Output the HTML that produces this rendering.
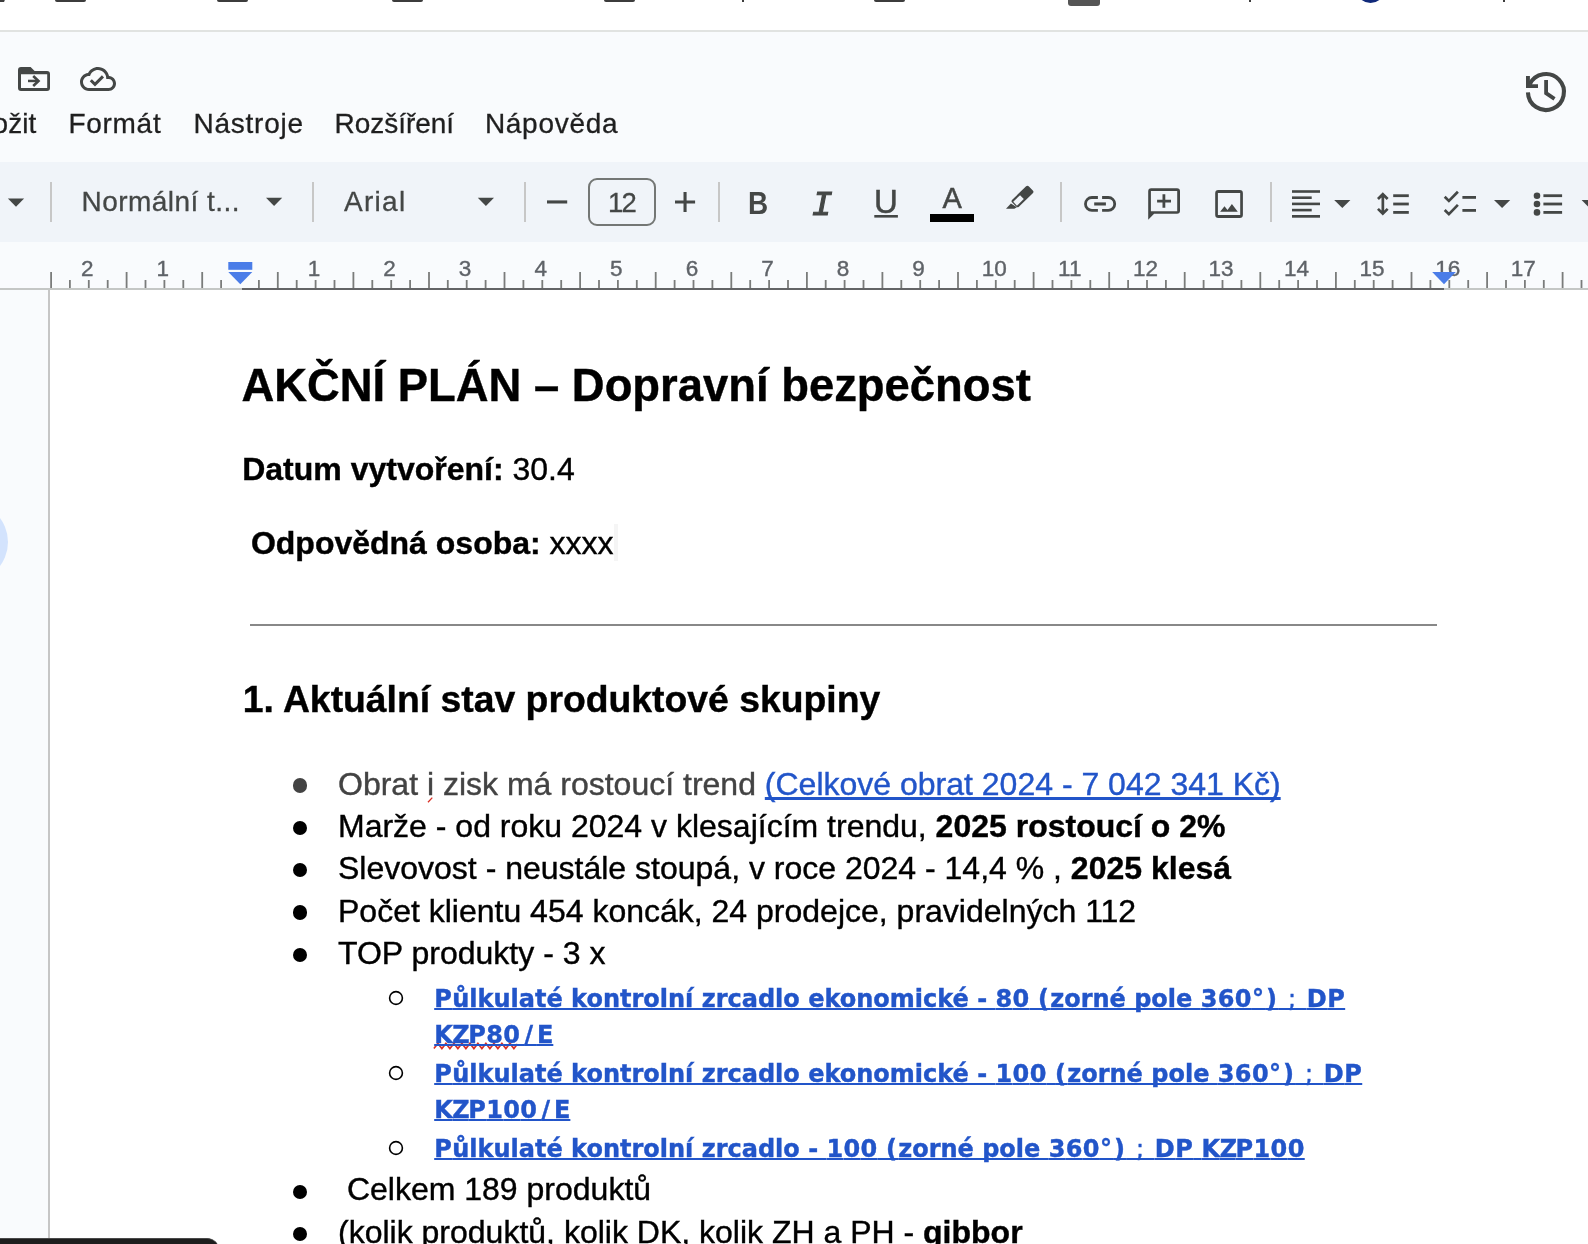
<!DOCTYPE html>
<html lang="cs">
<head>
<meta charset="utf-8">
<title>AKČNÍ PLÁN – Dopravní bezpečnost</title>
<style>
*{box-sizing:border-box;margin:0;padding:0}
html,body{width:1588px;height:1244px;overflow:hidden;background:#f9fbfd}
body{position:relative;font-family:"Liberation Sans",sans-serif;color:#000}
#root{position:absolute;left:0;top:0;width:1588px;height:1244px;overflow:hidden;will-change:transform}
.abs{position:absolute}
.t{position:absolute;white-space:pre;line-height:1}
/* browser chrome strip */
#chrome{left:0;top:0;width:1588px;height:30px;background:#fff}
#chromeline{left:0;top:30px;width:1588px;height:2px;background:#e1e3e1}
.cb{position:absolute;top:-4px;width:31px;height:6px;border-radius:2px;background:#3c3c3c}
/* menus */
.menu{font-size:28px;color:#1f1f1f;top:110px;-webkit-text-stroke:.3px #1f1f1f}
/* toolbar */
#toolbar{left:-40px;top:162px;width:1700px;height:80px;background:#f0f4f9}
.sep{position:absolute;top:182px;width:2px;height:40px;background:#c7c7c7}
.tb{font-size:28px;color:#444746;top:187px;-webkit-text-stroke:.3px #444746}
/* ruler */
.rn{position:absolute;top:257.800px;width:40px;text-align:center;font-size:22.500px;line-height:22px;color:#5f6368;-webkit-text-stroke:.4px #5f6368}
/* page */
#page{left:50px;top:290px;width:1600px;height:1000px;background:#fff}
#pageborder{left:48px;top:290px;width:2px;height:1000px;background:#c6c6c6}
.doc{position:absolute;white-space:pre;line-height:1;color:#000;-webkit-text-stroke:.4px}
.b{font-weight:bold}
.li{font-size:32px}
.lk{font-family:"DejaVu Sans","Liberation Sans",sans-serif;font-weight:bold;font-size:24px;color:#2255c9;text-decoration:underline;text-decoration-thickness:2px;text-underline-offset:1.200px;text-decoration-skip-ink:none}
.lk i{font-style:normal;font-weight:normal;letter-spacing:1.470px}
.al{color:#2255c9;text-decoration:underline;text-decoration-thickness:2.500px;text-underline-offset:2px;text-decoration-skip-ink:none}
.bul{position:absolute;width:14px;height:14px;border-radius:50%;background:#000}
.obul{position:absolute;border-radius:50%;border:1.600px solid #000}
</style>
</head>
<body>
<div id="root">
<div class="abs" id="chrome"></div>
<div class="abs" id="chromeline"></div>
<div class="cb" style="left:55px"></div><div class="cb" style="left:217px"></div><div class="cb" style="left:392px"></div><div class="cb" style="left:604px"></div><div class="cb" style="left:874px"></div>
<div class="abs" style="left:0;top:-3px;width:5px;height:5px;background:#3c3c3c;transform:skewX(-20deg)"></div>
<div class="abs" style="left:742px;top:0;width:2px;height:2px;background:#3c3c3c"></div>
<div class="abs" style="left:1249px;top:0;width:2px;height:2px;background:#3c3c3c"></div>
<div class="abs" style="left:1503px;top:0;width:2px;height:2px;background:#3c3c3c"></div>
<div class="abs" style="left:1068px;top:-4px;width:32px;height:10px;border-radius:3px;background:#555"></div>
<div class="abs" style="left:1356px;top:-26px;width:29px;height:29px;border-radius:50%;background:#10297a"></div>

<!-- menu row -->
<div class="t menu" style="left:-7.400px">ožit</div>
<div class="t menu" style="left:68.500px;letter-spacing:.7px">Formát</div>
<div class="t menu" style="left:193.500px;letter-spacing:.75px">Nástroje</div>
<div class="t menu" style="left:334.600px;letter-spacing:-.05px">Rozšíření</div>
<div class="t menu" style="left:484.900px;letter-spacing:.72px">Nápověda</div>

<!-- toolbar -->
<div class="abs" id="toolbar"></div>
<div class="sep" style="left:50px"></div>
<div class="sep" style="left:312px"></div>
<div class="sep" style="left:524px"></div>
<div class="sep" style="left:718px"></div>
<div class="sep" style="left:1060px"></div>
<div class="sep" style="left:1270px"></div>
<div class="t tb" style="left:81.500px;top:187.800px;letter-spacing:.46px">Normální t...</div>
<div class="t tb" style="left:344px;top:187.800px;letter-spacing:1.300px">Arial</div>
<div class="abs" style="left:588px;top:178px;width:68px;height:48px;border:2px solid #747775;border-radius:9px"></div>
<div class="t tb" style="left:608px;top:189px;font-size:27.500px;letter-spacing:-1.800px">12</div>

<!-- title row icons -->
<svg class="abs" style="left:0;top:55px" width="1588" height="70" viewBox="0 55 1588 70" fill="#444746">
<!-- move to folder -->
<path fill-rule="evenodd" d="M21 67h9.600l4 4H47a3 3 0 0 1 3 3v14a3 3 0 0 1-3 3H21a3 3 0 0 1-3-3V70a3 3 0 0 1 3-3zM21 74.200V88h26.200V74.200z"/>
<path d="M28 79.700h9v2.500h-9z"/><path d="M33.200 76l5.300 5-5.300 5" fill="none" stroke="#444746" stroke-width="2.600"/>
<!-- cloud done -->
<g transform="translate(80 61) scale(1.5)"><path d="M19.350 10.040C18.670 6.590 15.640 4 12 4 9.110 4 6.600 5.640 5.350 8.040 2.340 8.360 0 10.910 0 14c0 3.310 2.690 6 6 6h13c2.760 0 5-2.240 5-5 0-2.640-2.050-4.780-4.650-4.960zM19 18H6c-2.210 0-4-1.790-4-4s1.790-4 4-4h.710C7.370 7.690 9.480 6 12 6c3.040 0 5.500 2.460 5.500 5.500v.5H19c1.660 0 3 1.340 3 3s-1.340 3-3 3zm-9-3.820l-2.090-2.090L6.500 13.500 10 17l6.010-6.010-1.410-1.410z"/></g>
<!-- history -->
<g fill="none" stroke="#444746" stroke-width="4.100">
<path d="M1529.65 84.36A18.00 18.00 0 1 1 1527.95 92.40"/>
<path d="M1546.100 80v13.200l8.400 5.600" stroke-width="3.800"/>
</g>
<path d="M1526 76.100h3.900v8.100h8.100v3.800h-12z"/>
</svg>

<!-- toolbar icons -->
<svg class="abs" style="left:0;top:162px" width="1588" height="80" viewBox="0 162 1588 80" fill="#444746">
<path d="M7.900 198.600h16.200l-8.100 8.100z"/>
<path d="M266 197.800h16.200l-8.100 8.100z"/>
<path d="M477.800 197.800h16.200l-8.100 8.100z"/>
<rect x="547" y="200.400" width="20.200" height="3.100"/>
<path d="M675 200.400h8.500v-8.500h3.100v8.500h8.500v3.100h-8.500v8.600h-3.100v-8.600H675z"/>
<!-- underline bar, text colour bar -->
<rect x="874.300" y="215" width="23.600" height="2.600"/>
<rect x="930" y="214" width="44" height="8" fill="#000"/>
<!-- highlighter -->
<g>
<rect x="1010.850" y="191.700" width="23.300" height="9.600" rx="2" transform="rotate(-44 1022.500 196.500)"/>
<rect x="1013.750" y="197.750" width="9.500" height="5.400" fill="#f0f4f9" transform="rotate(-44 1018.500 200.450)"/>
<path d="M1010.900 203.600l-4.900 5.200h8.300l2.600-1.500z"/>
</g>
<!-- link -->
<g fill="none" stroke="#444746" stroke-width="2.800">
<path d="M1097.900 197.500h-6a6.420 6.420 0 0 0 0 12.850h6"/>
<path d="M1102.100 197.500h6.200a6.420 6.420 0 0 1 0 12.850h-6.200"/>
</g>
<rect x="1094.200" y="202.400" width="11.700" height="3.100"/>
<!-- add comment -->
<path fill-rule="evenodd" d="M1151.200 188.200H1177a3 3 0 0 1 3 3v19.600a3 3 0 0 1-3 3h-22.900l-5.900 6V191.200a3 3 0 0 1 3-3zM1150.900 190.900v20.300h26.300v-20.300z"/>
<path d="M1162.500 194.300h2.800v5.400h5.700v2.800h-5.700v5.200h-2.800v-5.200h-5.400v-2.800h5.400z"/>
<!-- image -->
<path fill-rule="evenodd" d="M1218.400 190.100h21.300a3.200 3.200 0 0 1 3.200 3.200v21.400a3.200 3.200 0 0 1-3.200 3.200h-21.300a3.200 3.200 0 0 1-3.200-3.200v-21.400a3.200 3.200 0 0 1 3.200-3.200zM1217.900 192.900V215h22.300v-22.100z"/>
<path d="M1220.100 211.800l4.400-5.600 3 3.800 4.400-5.900 5.900 7.700z"/>
<!-- align left -->
<rect x="1292" y="190.200" width="28" height="2.600"/>
<rect x="1292" y="196.400" width="19.700" height="2.600"/>
<rect x="1292" y="202.600" width="28" height="2.600"/>
<rect x="1292" y="208.800" width="19.700" height="2.600"/>
<rect x="1292" y="215" width="28" height="2.700"/>
<path d="M1334.200 200h16.200l-8.100 8.100z"/>
<!-- line spacing -->
<rect x="1393.200" y="194.300" width="15.600" height="2.800"/>
<rect x="1393.200" y="202.600" width="15.600" height="2.800"/>
<rect x="1393.200" y="211" width="15.600" height="2.800"/>
<path d="M1382.800 192.300l5.800 5.800-1.900 1.900-2.500-2.500v12.900l2.500-2.500 1.900 1.900-5.800 5.800-5.800-5.800 1.900-1.900 2.600 2.500v-12.900l-2.600 2.500-1.900-1.900z"/>
<!-- checklist -->
<g fill="none" stroke="#444746" stroke-width="2.700">
<path d="M1444.700 196.800l4.200 4.100 9-9.200"/>
<path d="M1444.700 210l4.200 4.100 9-9.200"/>
</g>
<rect x="1462.400" y="196" width="13.600" height="2.800"/>
<rect x="1462.400" y="209" width="13.600" height="2.800"/>
<path d="M1494 200h16.200l-8.100 8.100z"/>
<!-- bulleted list -->
<circle cx="1537" cy="195.800" r="3.300"/>
<circle cx="1537" cy="204" r="3.300"/>
<circle cx="1537" cy="212.400" r="3.300"/>
<rect x="1543.400" y="194.300" width="18.700" height="2.800"/>
<rect x="1543.400" y="202.600" width="18.700" height="2.800"/>
<rect x="1543.400" y="211" width="18.700" height="2.800"/>
<path d="M1581.600 200h16.200l-8.100 8.100z"/>
</svg>
<div class="t" style="left:748px;top:188.300px;font-size:31px;font-weight:bold;color:#444746;transform:scaleX(.9);transform-origin:0 0">B</div>
<div class="t" style="left:811.500px;top:188.800px;font-size:35px;font-family:'Liberation Mono',monospace;font-style:italic;color:#444746;-webkit-text-stroke:1.100px #444746">I</div>
<div class="t" style="left:874px;top:185px;font-size:33px;color:#444746;-webkit-text-stroke:.5px #444746">U</div>
<div class="t" style="left:942.500px;top:184.300px;font-size:29px;color:#444746;-webkit-text-stroke:.5px #444746">A</div>


<!-- ruler -->
<div class="rn" style="left:67.2px">2</div><div class="rn" style="left:142.8px">1</div><div class="rn" style="left:294.0px">1</div><div class="rn" style="left:369.6px">2</div><div class="rn" style="left:445.1px">3</div><div class="rn" style="left:520.7px">4</div><div class="rn" style="left:596.3px">5</div><div class="rn" style="left:671.9px">6</div><div class="rn" style="left:747.5px">7</div><div class="rn" style="left:823.0px">8</div><div class="rn" style="left:898.6px">9</div><div class="rn" style="left:974.2px">10</div><div class="rn" style="left:1049.8px">11</div><div class="rn" style="left:1125.4px">12</div><div class="rn" style="left:1200.9px">13</div><div class="rn" style="left:1276.5px">14</div><div class="rn" style="left:1352.1px">15</div><div class="rn" style="left:1427.7px">16</div><div class="rn" style="left:1503.3px">17</div><svg class="abs" style="left:0;top:244px" width="1588" height="50" viewBox="0 244 1588 50"><rect x="0" y="288" width="1588" height="2" fill="#c4c7c5"/><rect x="242" y="288" width="1202" height="2" fill="#636466"/><g fill="#7a7c7b"><rect x="50.2" y="272" width="1.800" height="16"/><rect x="69.0" y="280" width="1.800" height="8"/><rect x="87.9" y="280" width="1.800" height="8"/><rect x="106.8" y="280" width="1.800" height="8"/><rect x="125.7" y="272" width="1.800" height="16"/><rect x="144.6" y="280" width="1.800" height="8"/><rect x="163.5" y="280" width="1.800" height="8"/><rect x="182.4" y="280" width="1.800" height="8"/><rect x="201.3" y="272" width="1.800" height="16"/><rect x="220.2" y="280" width="1.800" height="8"/><rect x="258.0" y="280" width="1.800" height="8"/><rect x="276.9" y="272" width="1.800" height="16"/><rect x="295.8" y="280" width="1.800" height="8"/><rect x="314.7" y="280" width="1.800" height="8"/><rect x="333.6" y="280" width="1.800" height="8"/><rect x="352.5" y="272" width="1.800" height="16"/><rect x="371.4" y="280" width="1.800" height="8"/><rect x="390.3" y="280" width="1.800" height="8"/><rect x="409.2" y="280" width="1.800" height="8"/><rect x="428.1" y="272" width="1.800" height="16"/><rect x="446.9" y="280" width="1.800" height="8"/><rect x="465.8" y="280" width="1.800" height="8"/><rect x="484.7" y="280" width="1.800" height="8"/><rect x="503.6" y="272" width="1.800" height="16"/><rect x="522.5" y="280" width="1.800" height="8"/><rect x="541.4" y="280" width="1.800" height="8"/><rect x="560.3" y="280" width="1.800" height="8"/><rect x="579.2" y="272" width="1.800" height="16"/><rect x="598.1" y="280" width="1.800" height="8"/><rect x="617.0" y="280" width="1.800" height="8"/><rect x="635.9" y="280" width="1.800" height="8"/><rect x="654.8" y="272" width="1.800" height="16"/><rect x="673.7" y="280" width="1.800" height="8"/><rect x="692.6" y="280" width="1.800" height="8"/><rect x="711.5" y="280" width="1.800" height="8"/><rect x="730.4" y="272" width="1.800" height="16"/><rect x="749.3" y="280" width="1.800" height="8"/><rect x="768.2" y="280" width="1.800" height="8"/><rect x="787.1" y="280" width="1.800" height="8"/><rect x="806.0" y="272" width="1.800" height="16"/><rect x="824.8" y="280" width="1.800" height="8"/><rect x="843.7" y="280" width="1.800" height="8"/><rect x="862.6" y="280" width="1.800" height="8"/><rect x="881.5" y="272" width="1.800" height="16"/><rect x="900.4" y="280" width="1.800" height="8"/><rect x="919.3" y="280" width="1.800" height="8"/><rect x="938.2" y="280" width="1.800" height="8"/><rect x="957.1" y="272" width="1.800" height="16"/><rect x="976.0" y="280" width="1.800" height="8"/><rect x="994.9" y="280" width="1.800" height="8"/><rect x="1013.8" y="280" width="1.800" height="8"/><rect x="1032.7" y="272" width="1.800" height="16"/><rect x="1051.6" y="280" width="1.800" height="8"/><rect x="1070.5" y="280" width="1.800" height="8"/><rect x="1089.4" y="280" width="1.800" height="8"/><rect x="1108.3" y="272" width="1.800" height="16"/><rect x="1127.2" y="280" width="1.800" height="8"/><rect x="1146.1" y="280" width="1.800" height="8"/><rect x="1165.0" y="280" width="1.800" height="8"/><rect x="1183.8" y="272" width="1.800" height="16"/><rect x="1202.7" y="280" width="1.800" height="8"/><rect x="1221.6" y="280" width="1.800" height="8"/><rect x="1240.5" y="280" width="1.800" height="8"/><rect x="1259.4" y="272" width="1.800" height="16"/><rect x="1278.3" y="280" width="1.800" height="8"/><rect x="1297.2" y="280" width="1.800" height="8"/><rect x="1316.1" y="280" width="1.800" height="8"/><rect x="1335.0" y="272" width="1.800" height="16"/><rect x="1353.9" y="280" width="1.800" height="8"/><rect x="1372.8" y="280" width="1.800" height="8"/><rect x="1391.7" y="280" width="1.800" height="8"/><rect x="1410.6" y="272" width="1.800" height="16"/><rect x="1429.5" y="280" width="1.800" height="8"/><rect x="1448.4" y="280" width="1.800" height="8"/><rect x="1467.3" y="280" width="1.800" height="8"/><rect x="1486.2" y="272" width="1.800" height="16"/><rect x="1505.1" y="280" width="1.800" height="8"/><rect x="1524.0" y="280" width="1.800" height="8"/><rect x="1542.9" y="280" width="1.800" height="8"/><rect x="1561.7" y="272" width="1.800" height="16"/><rect x="1580.6" y="280" width="1.800" height="8"/></g><g fill="#4b7de8"><rect x="228.300" y="262" width="24" height="7.800"/><path d="M228.300 272h24l-12 12.300z"/><path d="M1432.200 272h23.600l-11.800 12.300z"/></g></svg>

<!-- page -->
<div class="abs" id="page"></div>
<div class="abs" id="pageborder"></div>
<div class="abs" style="left:-72px;top:502px;width:80px;height:80px;border-radius:50%;background:#d3e3fd"></div>

<div class="doc b" style="left:241.50px;top:363.07px;font-size:45.40px;">AKČNÍ PLÁN – Dopravní bezpečnost</div>
<div class="doc " style="left:242.20px;top:453.31px;font-size:32.00px;"><b>Datum vytvoření:</b> 30.4</div>
<div class="doc " style="left:242.00px;top:526.91px;font-size:32.00px;"> <b>Odpovědná osoba:</b> xxxx</div>
<div class="abs" style="left:614.200px;top:524px;width:3.700px;height:36.500px;background:#f5f5f5"></div>
<div class="abs" style="left:250px;top:624px;width:1187px;height:2px;background:#888"></div>
<div class="doc b" style="left:242.80px;top:681.40px;font-size:37.33px;">1. Aktuální stav produktové skupiny</div>
<div class="bul" style="left:292.80px;top:778.40px;width:14.40px;height:14.40px;background:#434343"></div>
<div class="doc " style="left:338.00px;top:767.51px;font-size:32.00px;"><span style="color:#434343">Obrat i zisk má rostoucí trend </span><span class="al">(Celkové obrat 2024 - 7 042 341 Kč)</span></div>
<div class="bul" style="left:292.80px;top:820.70px;width:14.40px;height:14.40px;background:#000"></div>
<div class="doc " style="left:338.00px;top:809.81px;font-size:32.00px;">Marže - od roku 2024 v klesajícím trendu, <b>2025 rostoucí o 2%</b></div>
<div class="bul" style="left:292.80px;top:863.00px;width:14.40px;height:14.40px;background:#000"></div>
<div class="doc " style="left:338.00px;top:852.11px;font-size:32.00px;">Slevovost - neustále stoupá, v roce 2024 - 14,4 % , <b>2025 klesá</b></div>
<div class="bul" style="left:292.80px;top:905.40px;width:14.40px;height:14.40px;background:#000"></div>
<div class="doc " style="left:338.00px;top:894.51px;font-size:32.00px;">Počet klientu 454 koncák, 24 prodejce, pravidelných 112</div>
<div class="bul" style="left:292.80px;top:947.70px;width:14.40px;height:14.40px;background:#000"></div>
<div class="doc " style="left:338.00px;top:936.81px;font-size:32.00px;">TOP produkty - 3 x</div>
<svg class="abs" style="left:420px;top:1036px" width="120" height="20" viewBox="420 1036 120 20"><path d="M433.9 1048.6 L437.9 1043.4 L441.9 1048.6 L445.9 1043.4 L449.9 1048.6 L453.9 1043.4 L457.9 1048.6 L461.9 1043.4 L465.9 1048.6 L469.9 1043.4 L473.9 1048.6 L477.9 1043.4 L481.9 1048.6 L485.9 1043.4 L489.9 1048.6 L493.9 1043.4 L497.9 1048.6 L501.9 1043.4 L505.9 1048.6 L509.9 1043.4 L513.9 1048.6 L517.4 1044" fill="none" stroke="#d93025" stroke-width="1.600"/></svg>
<svg class="abs" style="left:424px;top:794px" width="12" height="12" viewBox="424 794 12 12"><path d="M428 802.300L432.300 797.600" fill="none" stroke="#d93025" stroke-width="1.300"/></svg>
<svg class="abs" style="left:385.50px;top:987.70px" width="20" height="20" viewBox="0 0 20 20"><circle cx="10" cy="10" r="6.40" fill="none" stroke="#000" stroke-width="1.600"/></svg>
<div class="doc lk" style="left:434.20px;top:986.68px;font-size:24.00px;"><span style="letter-spacing:0.40px">P</span>ůlkulaté kontrolní zrcadlo ekonomické - <span style="letter-spacing:0.36px">8</span><span style="letter-spacing:0.36px">0</span> <span style="letter-spacing:1.20px">(</span>zorné pole <span style="letter-spacing:0.36px">3</span><span style="letter-spacing:0.36px">6</span><span style="letter-spacing:0.36px">0</span><span style="letter-spacing:2.00px">°</span><span style="letter-spacing:2.00px">)</span><i> ; </i><span style="letter-spacing:0.60px">D</span><span style="letter-spacing:0.40px">P</span></div>
<div class="doc lk" style="left:434.20px;top:1022.78px;font-size:24.00px;"><span style="letter-spacing:-0.50px">K</span><span style="letter-spacing:-1.50px">Z</span><span style="letter-spacing:0.40px">P</span><span style="letter-spacing:0.36px">8</span><span style="letter-spacing:4.26px">0</span><span style="letter-spacing:3.90px">/</span>E</div>
<svg class="abs" style="left:385.50px;top:1062.90px" width="20" height="20" viewBox="0 0 20 20"><circle cx="10" cy="10" r="6.40" fill="none" stroke="#000" stroke-width="1.600"/></svg>
<div class="doc lk" style="left:434.20px;top:1061.88px;font-size:24.00px;"><span style="letter-spacing:0.40px">P</span>ůlkulaté kontrolní zrcadlo ekonomické - <span style="letter-spacing:0.36px">1</span><span style="letter-spacing:0.36px">0</span><span style="letter-spacing:0.36px">0</span> <span style="letter-spacing:1.20px">(</span>zorné pole <span style="letter-spacing:0.36px">3</span><span style="letter-spacing:0.36px">6</span><span style="letter-spacing:0.36px">0</span><span style="letter-spacing:2.00px">°</span><span style="letter-spacing:2.00px">)</span><i> ; </i><span style="letter-spacing:0.60px">D</span><span style="letter-spacing:0.40px">P</span></div>
<div class="doc lk" style="left:434.20px;top:1098.08px;font-size:24.00px;"><span style="letter-spacing:-0.50px">K</span><span style="letter-spacing:-1.50px">Z</span><span style="letter-spacing:0.40px">P</span><span style="letter-spacing:0.36px">1</span><span style="letter-spacing:0.36px">0</span><span style="letter-spacing:4.26px">0</span><span style="letter-spacing:3.90px">/</span>E</div>
<svg class="abs" style="left:385.50px;top:1138.20px" width="20" height="20" viewBox="0 0 20 20"><circle cx="10" cy="10" r="6.40" fill="none" stroke="#000" stroke-width="1.600"/></svg>
<div class="doc lk" style="left:434.20px;top:1137.18px;font-size:24.00px;"><span style="letter-spacing:0.40px">P</span>ůlkulaté kontrolní zrcadlo - <span style="letter-spacing:0.36px">1</span><span style="letter-spacing:0.36px">0</span><span style="letter-spacing:0.36px">0</span> <span style="letter-spacing:1.20px">(</span>zorné pole <span style="letter-spacing:0.36px">3</span><span style="letter-spacing:0.36px">6</span><span style="letter-spacing:0.36px">0</span><span style="letter-spacing:2.00px">°</span><span style="letter-spacing:2.00px">)</span><i> ; </i><span style="letter-spacing:0.60px">D</span><span style="letter-spacing:0.40px">P</span> <span style="letter-spacing:-0.50px">K</span><span style="letter-spacing:-1.50px">Z</span><span style="letter-spacing:0.40px">P</span><span style="letter-spacing:0.36px">1</span><span style="letter-spacing:0.36px">0</span><span style="letter-spacing:0.36px">0</span></div>
<div class="bul" style="left:292.80px;top:1184.60px;width:14.40px;height:14.40px;background:#000"></div>
<div class="doc " style="left:338.00px;top:1173.41px;font-size:32.00px;"> Celkem 189 produktů</div>
<div class="bul" style="left:292.80px;top:1226.60px;width:14.40px;height:14.40px;background:#000"></div>
<div class="doc " style="left:338.00px;top:1215.51px;font-size:32.00px;">(kolik produktů, kolik DK, kolik ZH a PH - <b>gibbor</b></div>


<div class="abs" style="left:-20px;top:1238px;width:239px;height:30px;border-radius:12px;background:#1d1d1d;border-top:1px solid #4a4a4a"></div>
</div>
</body>
</html>
